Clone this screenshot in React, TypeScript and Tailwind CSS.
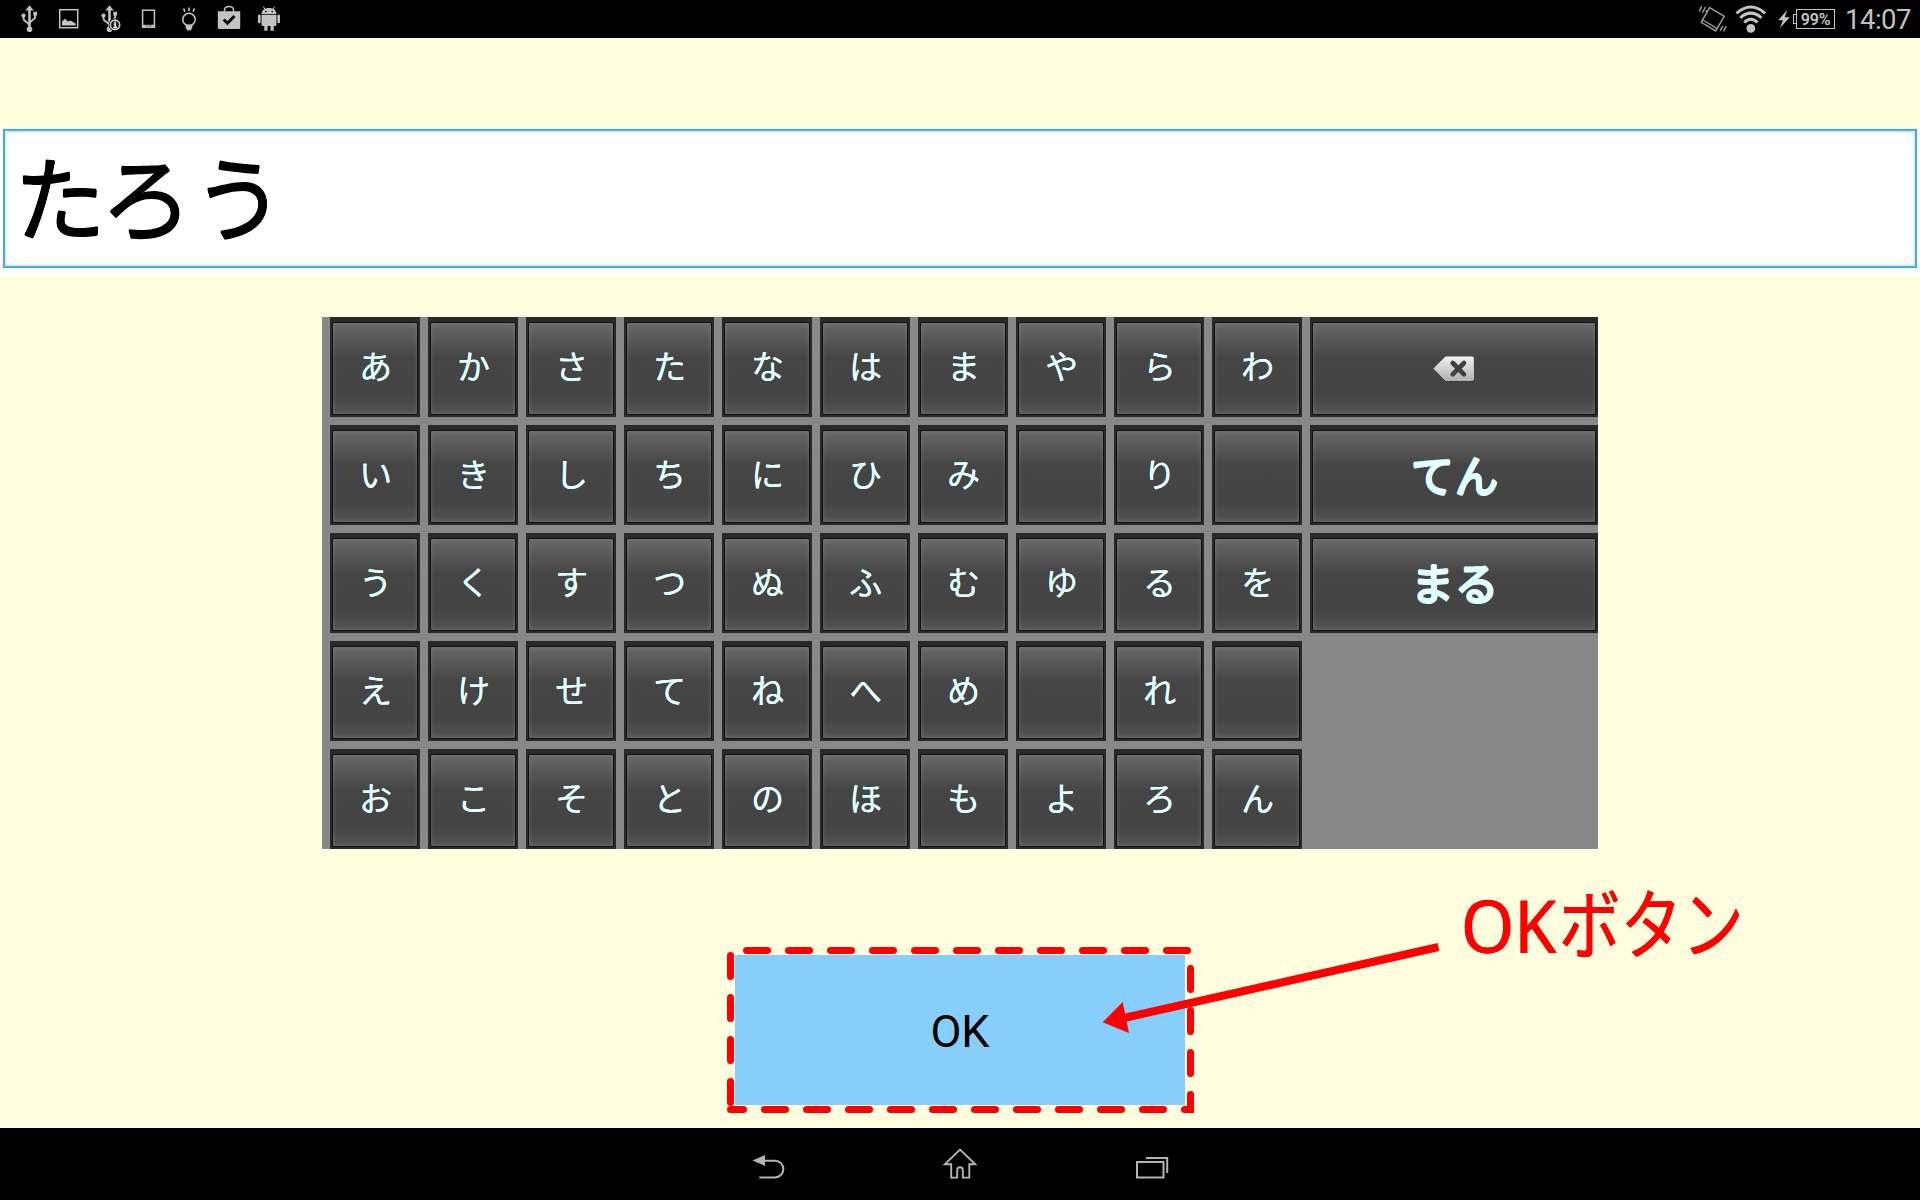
import React from 'react';

const G = '#c4c4c4';

function Icon({ x, w = 40, children }: { x: number; w?: number; children: React.ReactNode }) {
  return (
    <svg className="h-[38px] shrink-0" width={w} height={38} viewBox={`${x} 0 ${w} 38`} fill="none" stroke={G} strokeWidth={1.5}>
      {children}
    </svg>
  );
}

function UsbShape() {
  return (
    <>
      <path d="M25.3 10.5 29.5 5.3 33.7 10.5Z" fill={G} stroke="none" />
      <path d="M29.5 9V29" strokeWidth={2.6} />
      <circle cx="29.5" cy="29.3" r="2.8" fill={G} stroke="none" />
      <path d="M23.5 15.5V18.5C23.5 21.5 28.5 22 28.9 25M35.2 14.5V17C35.2 20 30.5 20 30 23" strokeWidth={1.9} />
      <circle cx="23.5" cy="15.5" r="2.1" fill={G} stroke="none" />
      <rect x="33.3" y="11.8" width="3.7" height="3.8" fill={G} stroke="none" />
    </>
  );
}

function StatusBar() {
  return (
    <header className="flex h-[38px] shrink-0 items-center justify-between bg-black">
      <div className="ml-[9px] flex">
        <Icon x={9}><UsbShape /></Icon>
        <Icon x={49}>
          <rect x="59.7" y="9.7" width="18" height="18" />
          <path d="M62 25.5V21.5L65 18.7 68 21.5 70.5 20.5 75.7 23.5V25.5Z" fill={G} stroke="none" />
        </Icon>
        <Icon x={89}>
          <g transform="translate(80 0)"><UsbShape /></g>
          <circle cx="115" cy="24.8" r="5.6" fill="#000" stroke="#000" strokeWidth={1.4} />
          <circle cx="115" cy="24.8" r="4.7" fill="#111" stroke="#d0d0d0" strokeWidth={1.6} />
          <path d="M115.1 21.4v1.7M113.6 24.2h1.7v3.2M113.3 27.4h3.9" stroke="#e0e0e0" strokeWidth={1.8} />
        </Icon>
        <Icon x={129}>
          <rect x="142.6" y="10.2" width="11.8" height="17" />
          <path d="M142.6 25.8H154.4" strokeWidth={2} />
          <path d="M146.5 25.8h1M149.8 25.8h1" stroke="#000" strokeWidth={1} />
        </Icon>
        <Icon x={169}>
          <circle cx="189" cy="19.5" r="6.2" />
          <path d="M185.7 24.5h6.6V28l-1.8 2.5h-3L185.7 28Z" fill={G} stroke="none" />
          <path d="M189 7.5V11M183.7 8.5 184.8 11.8M194.3 8.5 193.2 11.8" strokeWidth={1.6} />
        </Icon>
        <Icon x={209}>
          <path d="M217.8 11.2H240.2V28Q240.2 29 239.2 29H218.8Q217.8 29 217.8 28Z" fill={G} stroke="none" />
          <path d="M224.5 11.5V9.5Q225 6.6 229 6.6T233.5 9.5V11.5" />
          <path d="M223.7 19.5 227.5 23.2 234.5 16" stroke="#000" strokeWidth={3} />
        </Icon>
        <Icon x={249}>
          <path d="M261.5 14.2C261.8 10 264.5 8 269 8S276.2 10 276.5 14.2Z" fill={G} stroke="none" />
          <path d="M264.8 9 263.4 6.5M273.2 9 274.6 6.5" strokeWidth={1} />
          <path d="M261.5 15.1H276.5V24.5Q276.5 26 275 26H273.7V30.7H270.5V26H267.5V30.7H264.3V26H263Q261.5 26 261.5 24.5Z" fill={G} stroke="none" />
          <rect x="258" y="14.6" width="2.6" height="8.6" rx="1.2" fill={G} stroke="none" />
          <rect x="277.4" y="14.6" width="2.6" height="8.6" rx="1.2" fill={G} stroke="none" />
          <circle cx="265.8" cy="11.6" r=".8" fill="#000" stroke="none" />
          <circle cx="272.2" cy="11.6" r=".8" fill="#000" stroke="none" />
        </Icon>
      </div>
      <div className="mr-[9px] flex items-center">
        <Icon x={1694} w={36}>
          <g stroke="#999">
            <path d="M1708.6 7.6 1723.3 16.3 1714.6 31 1700.2 22.3Z" strokeWidth={1.5} />
            <path d="M1701.8 20 1716.2 28.6" strokeWidth={1.3} />
            <path d="M1698.2 11.3 1700.8 6.3M1701.5 12.7 1704.5 7M1705 11.8 1705.8 10.3M1719.2 30.8 1721.8 25.8M1722.5 31.5 1725.3 26.2" strokeWidth={1.5} />
          </g>
        </Icon>
        <Icon x={1730} w={40}>
          <circle cx="1749.8" cy="28.3" r="4.4" fill={G} stroke="none" />
          <path d="M1735.5 13.3Q1749.8 .8 1764.2 13.3M1739.3 17.8Q1749.8 8.5 1760.4 17.8M1743.2 22.5Q1749.8 16 1756.5 22.5" strokeWidth={3} />
        </Icon>
        <Icon x={1770} w={22}>
          <path d="M1786.3 10 1777.2 20.3H1782L1778.8 28.2 1788.8 17.3H1783.7Z" fill={G} stroke="none" />
        </Icon>
        <div className="flex h-[38px] w-[42px] items-center">
          <div className="h-2.5 w-[3px] border border-r-0 border-[#c4c4c4]" />
          <div className="flex h-5 w-[39px] items-center justify-center border border-[#c4c4c4] pt-px font-['Roboto'] text-[16px] leading-none font-semibold tracking-[-0.2px] text-[#c4c4c4]">
            99%
          </div>
        </div>
        <div className="ml-[10px] flex h-[38px] w-[66px] justify-end pt-px font-['Roboto'] text-[27.5px] leading-[38px] font-normal tracking-[-0.5px] whitespace-nowrap text-[#c0c0c0]">14:07</div>
      </div>
    </header>
  );
}

const rows = ['あかさたなはまやらわ', 'いきしちにひみ　り　', 'うくすつぬふむゆるを', 'えけせてねへめ　れ　', 'おこそとのほもよろん'];

function Key({ children, wide }: { children: React.ReactNode; wide?: boolean }) {
  return (
    <button className={`${wide ? "w-[288px] text-[44px] font-medium [text-shadow:0.8px_0_#e0ffff,-0.8px_0_#e0ffff,0_0.8px_#e0ffff,0_-0.8px_#e0ffff]" : "w-[90px] text-[33px] font-normal [text-shadow:0.2px_0_#e0ffff]"} h-[100px] shrink-0 bg-[#292929] pt-[5px] pr-[2px] pb-[2px] pl-[2px] font-['Noto_Sans_CJK_JP',sans-serif] text-[#e0ffff]`}>
      <span className="flex h-full items-center justify-center rounded-[2px] border border-[#101010] bg-[linear-gradient(#686868_0%,#575757_18%,#454545_38%,#444_80%,#555_100%)] pb-[6px] pl-px leading-none shadow-[inset_0_0_5px_rgba(140,140,140,0.45),inset_0_0_1px_rgba(150,150,150,0.8)]">
        {children}
      </span>
    </button>
  );
}

function DeleteIcon() {
  return (
    <svg className="mt-[6px] mr-px" width="42" height="28" viewBox="0 0 42 28">
      <defs>
        <linearGradient id="del" x1="0" y1="0" x2="0" y2="1">
          <stop offset="0" stopColor="#f2f2f2" />
          <stop offset="1" stopColor="#b0b0b0" />
        </linearGradient>
      </defs>
      <path d="M1 14 12.7 2.5H39Q40.5 2.5 40.5 4V25Q40.5 26.5 39 26.5H12.7Z" fill="#222" opacity=".6" />
      <path d="M.8 13.6 12.5 1.8H39Q40.5 1.8 40.5 3.3V24Q40.5 25.4 39 25.4H12.5Z" fill="url(#del)" stroke="#eee" strokeWidth=".6" />
      <path d="M19.7 8 31 19.3M31 8 19.7 19.3" stroke="#404040" strokeWidth="4.6" strokeLinecap="round" />
    </svg>
  );
}

function Keyboard() {
  const side: Record<number, React.ReactNode> = { 0: <DeleteIcon />, 1: 'てん', 2: 'まる' };
  return (
    <section className="mx-auto mt-[41px] flex w-[1276px] shrink-0 flex-col gap-2 bg-[#888] pl-2">
      {rows.map((row, r) => (
        <div key={row} className="flex gap-2">
          {[...row].map((k, i) => <Key key={i}>{k}</Key>)}
          {side[r] && <Key wide>{side[r]}</Key>}
        </div>
      ))}
    </section>
  );
}

function Callout() {
  return (
    <>
      <svg className="pointer-events-none absolute top-[940px] left-[720px]" width="730" height="180" viewBox="720 940 730 180" fill="none" stroke="#f00">
        <path d="M746.5 950.5H1190.5V1109.5H730.5" strokeWidth="7" strokeDasharray="21 21" strokeLinecap="round" />
        <path d="M730.5 955.5V1103" strokeWidth="7" strokeDasharray="21 21" strokeLinecap="round" />
        <path d="M1124 1018 1438.5 947" strokeWidth="8" />
        <path d="M1102.7 1022.3 1122.7 1002 1129 1033Z" fill="#f00" stroke="none" />
      </svg>
      <div className="absolute top-[870px] left-[1461px] flex h-[100px] items-baseline leading-[100px] whitespace-nowrap text-[#f00]">
        <span className="w-[98px] origin-left scale-x-[0.94] font-['Noto_Sans'] text-[72.5px] [text-shadow:0.5px_0_#f00,-0.5px_0_#f00]">OK</span>
        <span className="origin-left scale-x-[0.81] font-['Noto_Sans_CJK_JP',sans-serif] text-[76px] font-normal [text-shadow:0.5px_0_#f00,-0.5px_0_#f00]">ボタン</span>
      </div>
    </>
  );
}

function NavBar() {
  return (
    <nav className="flex h-[72px] shrink-0 items-center justify-center gap-[132px] bg-black">
      <svg width="60" height="72" viewBox="738 1128 60 72" fill="none" stroke="#b4b4b4" strokeWidth="2">
        <path d="M764 1160.7H775A8.3 8.3 0 0 1 775 1177.4H759.3" />
        <path d="M752.5 1160.5 765 1155V1166Z" fill="#b4b4b4" stroke="none" />
      </svg>
      <svg width="60" height="72" viewBox="930 1128 60 72" fill="none" stroke="#b4b4b4" strokeWidth="1.9">
        <path d="M960 1149.6 944.8 1164.3H951.2V1177.6H957.2V1170A2.8 2.8 0 0 1 962.8 1170V1177.6H969.3V1164.3H975.3Z" />
      </svg>
      <svg width="60" height="72" viewBox="1122 1128 60 72" fill="none" stroke="#b4b4b4" strokeWidth="2">
        <rect x="1137" y="1162" width="26.5" height="15.5" />
        <path d="M1146 1158H1167.2V1173" />
      </svg>
    </nav>
  );
}

export default function App() {
  return (
    <div className="relative flex h-[1200px] w-[1920px] flex-col overflow-hidden bg-[#ffffe0]">
      <StatusBar />
      <main className="flex flex-1 flex-col">
        <div className="mt-[90px] h-[148px] shrink-0 bg-white px-[3px] pt-px">
          <div className="flex h-[139px] items-center border border-[#33a5da] bg-white pb-[9px] pl-[10px] font-['Noto_Sans_CJK_JP',sans-serif] text-[92px] leading-none font-normal text-black shadow-[inset_0_0_0_1px_#5fb7e0,inset_0_0_2px_2px_#b5dff2] [text-shadow:0.6px_0_#000,-0.6px_0_#000,0_0.6px_#000,0_-0.6px_#000]">
            たろう
          </div>
        </div>
        <Keyboard />
        <button className="mx-auto mt-[106px] h-[150px] w-[450px] shrink-0 bg-[#87cefa] pt-[3px] font-['Roboto'] text-[45px] leading-none text-black">
          OK
        </button>
      </main>
      <NavBar />
      <Callout />
    </div>
  );
}
